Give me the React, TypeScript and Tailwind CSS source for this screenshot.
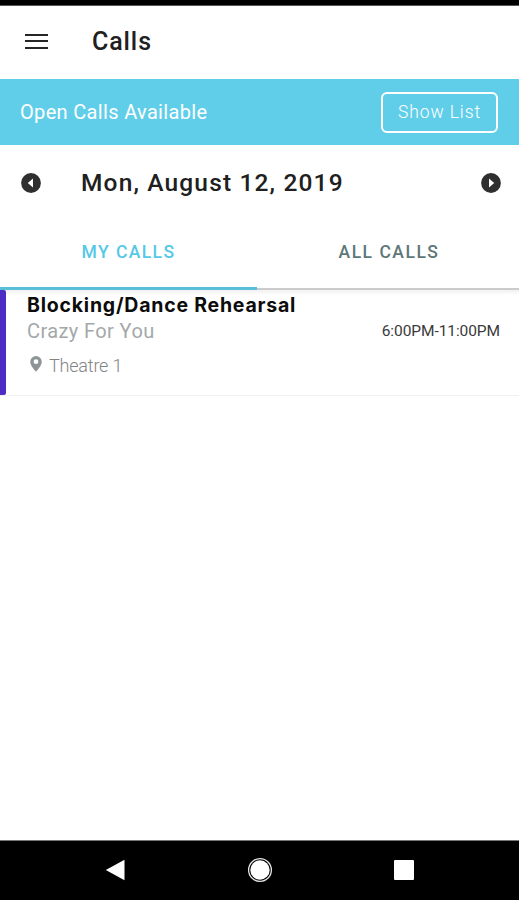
import { useState } from "react";

interface Call {
  title: string;
  production: string;
  location: string;
  time: string;
}

const calls: Call[] = [
  {
    title: "Blocking/Dance Rehearsal",
    production: "Crazy For You",
    location: "Theatre 1",
    time: "6:00PM-11:00PM",
  },
];

function DayArrow({ flip = false }: { flip?: boolean }) {
  return (
    <svg viewBox="0 0 20 20" className={flip ? "size-5 rotate-180" : "size-5"}>
      <circle cx="10" cy="10" r="9.9" fill="#2f2f2f" />
      <path d="M12 5.6v8.8L6.8 10z" fill="#fff" />
    </svg>
  );
}

function PinIcon() {
  return (
    <svg viewBox="0 0 12 16" className="h-4 w-3">
      <path
        d="M6 0a5.8 5.8 0 0 0-5.8 5.8C.2 9.9 6 15.8 6 15.8s5.8-5.9 5.8-10A5.8 5.8 0 0 0 6 0zm0 3.3a2.4 2.4 0 1 1 0 4.8 2.4 2.4 0 0 1 0-4.8z"
        fill="#8f9596"
      />
    </svg>
  );
}

function CallRow({ call }: { call: Call }) {
  return (
    <div className="flex h-[106px] border-b border-[#f0f0f0]">
      <div className="w-[6px] shrink-0 rounded-r-[2px] bg-[#4d2cc4]" />
      <div className="flex-1 bg-gradient-to-b from-[#f1f1f1] to-white to-5% pl-[21px] pr-[19px]">
        <p className="pt-[3px] font-['Inter',sans-serif] text-[19.5px] leading-6 font-bold tracking-[0.78px] text-[#0c0c0c]">
          {call.title}
        </p>
        <div className="flex items-center justify-between">
          <p className="text-[20px] leading-7 tracking-[0.4px] text-[#a4a8a9]">{call.production}</p>
          <p className="text-[15.5px] leading-7 tracking-[-0.08px] text-[#3a3a3a]">{call.time}</p>
        </div>
        <div className="mt-[9px] flex items-center gap-[7px] pl-[3px]">
          <div className="-mt-[5px]">
            <PinIcon />
          </div>
          <p className="text-[18px] leading-6 font-light tracking-[-0.2px] text-[#7f8586]">{call.location}</p>
        </div>
      </div>
    </div>
  );
}

export default function App() {
  const [tab, setTab] = useState<"mine" | "all">("mine");

  return (
    <div className="flex h-[900px] w-[519px] flex-col overflow-hidden whitespace-nowrap bg-white font-['Roboto',sans-serif]">
      <div className="h-[6px] shrink-0 border-b border-[#555] bg-black" />

      <header className="flex h-[73px] shrink-0 items-center pb-[3px] pl-[25px]">
        <button aria-label="Menu" className="flex w-[23px] flex-col gap-[4.5px]">
          <span className="h-[2px] bg-[#262626]" />
          <span className="h-[2px] bg-[#262626]" />
          <span className="h-[2px] bg-[#262626]" />
        </button>
        <h1 className="ml-[44px] pt-[2px] text-[25px] leading-8 font-medium tracking-[0.9px] text-[#202020]">Calls</h1>
      </header>

      <div className="flex h-[66px] shrink-0 items-center justify-between bg-[#61cee9] pr-[21px] pl-[20px] text-white">
        <span className="text-[20px] tracking-[0.33px]">Open Calls Available</span>
        <button className="flex h-[41px] w-[117px] items-center justify-center rounded-[6px] border-2 border-white text-[17.5px] font-light tracking-[0.9px]">
          Show List
        </button>
      </div>

      <div className="flex h-[76px] shrink-0 items-center pr-[18px] pl-[21px]">
        <button aria-label="Previous day">
          <DayArrow />
        </button>
        <h2 className="ml-[40px] flex-1 text-[24.5px] leading-8 font-medium tracking-[1.15px] text-[#202020]">
          Mon, August 12, 2019
        </h2>
        <button aria-label="Next day">
          <DayArrow flip />
        </button>
      </div>

      <div className="flex h-[69px] shrink-0 border-b-2 border-[#cbcbcd] text-[17.5px] font-medium">
        <button
          onClick={() => setTab("mine")}
          className={
            tab === "mine"
              ? "-mb-[2px] w-[257px] border-b-[3px] border-[#58bfd6] pb-[3px] tracking-[1.4px] text-[#55c8e6]"
              : "w-[257px] pb-[5px] tracking-[1.4px] text-[#5e7778]"
          }
        >
          MY CALLS
        </button>
        <button
          onClick={() => setTab("all")}
          className={
            tab === "all"
              ? "-mb-[2px] flex-1 border-b-[3px] border-[#58bfd6] pb-[3px] tracking-[1.5px] text-[#55c8e6]"
              : "flex-1 pb-[5px] pl-[2px] tracking-[1.5px] text-[#5e7778]"
          }
        >
          ALL CALLS
        </button>
      </div>

      <main className="flex-1">
        {calls.map((call) => (
          <CallRow key={call.title} call={call} />
        ))}
      </main>

      <nav className="flex h-[60px] shrink-0 items-center border-t border-[#777] bg-black pb-[2px] pl-[105px]">
        <svg viewBox="0 0 20 22" className="h-[22px] w-5">
          <path d="M19.5.8v20.4L.8 11z" fill="#fff" />
        </svg>
        <svg viewBox="0 0 26 26" className="ml-[122px] size-[26px]">
          <circle cx="13" cy="13" r="11.4" fill="none" stroke="#e6e6e6" strokeWidth="1.3" />
          <circle cx="13" cy="13" r="9.7" fill="#fff" />
        </svg>
        <span className="ml-[121px] size-5 rounded-[1px] bg-white" />
      </nav>
    </div>
  );
}
